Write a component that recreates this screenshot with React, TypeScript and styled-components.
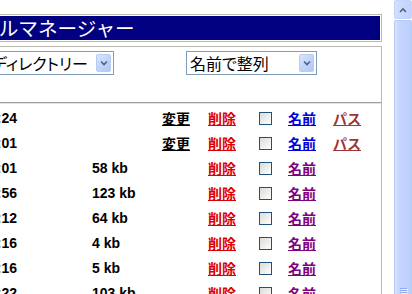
import React from "react";
import styled, { createGlobalStyle } from "styled-components";

const Global = createGlobalStyle`
  html, body { margin: 0; padding: 0; background: #ffffff; overflow: hidden; }
  body { width: 412px; height: 294px; }
`;

const Window = styled.div`
  display: flex;
  width: 412px;
  height: 294px;
  overflow: hidden;
  background: #ffffff;
`;

const Viewport = styled.div`
  flex: 0 0 393px;
  height: 294px;
  overflow: hidden;
`;

const Page = styled.div`
  margin-left: -64px;
  width: 446px;
  padding-top: 14px;
  font-family: "Liberation Sans", "Noto Sans CJK JP", sans-serif;
`;

const TitleFrame = styled.div`
  border: 1px solid #b9b9b0;
  padding: 1px;
`;

const Title = styled.div`
  background: #000080;
  color: #ffffff;
  height: 24px;
  line-height: 24px;
  padding-left: 2px;
  font-family: "Noto Sans CJK JP", sans-serif;
  font-size: 19.6px;
  white-space: nowrap;
`;

const Panel = styled.div`
  margin-top: 4px;
  border: 1px solid #b9b9b0;
  border-bottom: none;
  height: 260px;
`;

const Controls = styled.div`
  display: flex;
  align-items: center;
  padding: 4px 0 0 51px;
  gap: 72px;
  height: 24px;
`;

const SelectBox = styled.div<{ $w: number }>`
  width: ${(p) => p.$w}px;
  height: 24px;
  box-sizing: border-box;
  border: 1px solid #7f9db9;
  display: flex;
  align-items: center;
  padding: 0 2px 0 3px;
  background: #ffffff;
  font-family: "Noto Sans CJK JP", sans-serif;
  font-size: 16px;
  color: #000;
  font-feature-settings: "palt";
`;

const SelectText = styled.span`
  flex: 1;
  white-space: nowrap;
  overflow: hidden;
  line-height: 22px;
`;

const DropButton = styled.span`
  width: 15px;
  height: 18px;
  box-sizing: border-box;
  border: 1px solid #b8cbf5;
  border-radius: 2px;
  background: linear-gradient(135deg, #dce6fd 0%, #c2d4fb 50%, #b3c7f6 100%);
  display: flex;
  align-items: center;
  justify-content: center;
`;

const Rule = styled.div`
  margin-top: 27px;
  height: 0;
  border-top: 1px solid #a0a09a;
  border-bottom: 1px solid #e4e4de;
`;

const Rows = styled.div`
  margin-top: 1px;
`;

const Row = styled.div`
  display: grid;
  grid-template-columns: 80px 145px 46px 51px 29px 45px auto;
  align-items: center;
  height: 25px;
  font-size: 14px;
  font-weight: bold;
  white-space: nowrap;
`;

const Time = styled.span`
  text-align: right;
  color: #000;
`;

const Size = styled.span`
  padding-left: 75px;
  color: #000;
`;

const LinkText = styled.span<{ $c: string }>`
  font-family: "Noto Sans CJK JP", sans-serif;
  font-size: 14px;
  font-weight: bold;
  color: ${(p) => p.$c};
  text-decoration: underline;
  text-underline-offset: 1px;
`;

const Check = styled.span`
  display: block;
  width: 13px;
  height: 13px;
  box-sizing: border-box;
  border: 1px solid #1c5180;
  background: linear-gradient(135deg, #dcdcd7 0%, #f0f0ec 60%, #ffffff 100%);
  margin-top: 2px;
`;

const Scrollbar = styled.div`
  flex: 0 0 19px;
  height: 294px;
  background: #fcfcfe;
  display: flex;
  flex-direction: column;
  padding-left: 1px;
  box-sizing: border-box;
`;

const ArrowButton = styled.div`
  height: 19px;
  box-sizing: border-box;
  border: 1px solid #c4d4fb;
  border-radius: 2px;
  background: linear-gradient(to right, #d2dffd, #c0d2fb);
  display: flex;
  align-items: center;
  justify-content: center;
`;

const Thumb = styled.div`
  flex: 1;
  margin-top: 1px;
  box-sizing: border-box;
  border: 1px solid #b7cbf7;
  border-bottom: none;
  border-radius: 2px 2px 0 0;
  background: linear-gradient(to right, #d6e2fe 0%, #c3d5fd 30%, #bccffb 100%);
  display: flex;
  flex-direction: column;
  justify-content: flex-end;
  align-items: center;
`;

const Grip = styled.div`
  width: 7px;
  height: 1px;
  background: #8faaf0;
  margin-bottom: 1px;
  box-shadow: 1px 1px 0 #e8eefe;
`;

type Item = { time: string; size?: string; change?: boolean; name: string; path?: boolean };

const items: Item[] = [
  { time: "14:24", change: true, name: "#0000dd", path: true },
  { time: "15:01", change: true, name: "#0000dd", path: true },
  { time: "10:01", size: "58 kb", name: "#800080" },
  { time: "11:56", size: "123 kb", name: "#800080" },
  { time: "09:12", size: "64 kb", name: "#800080" },
  { time: "12:16", size: "4 kb", name: "#800080" },
  { time: "12:16", size: "5 kb", name: "#800080" },
  { time: "13:22", size: "103 kb", name: "#800080" },
];

const Chevron = ({ up }: { up?: boolean }) => (
  <svg width="8" height="6" viewBox="0 0 8 6">
    <path
      d={up ? "M1 5 L4 2 L7 5" : "M1 1.5 L4 4.5 L7 1.5"}
      fill="none"
      stroke="#4d6185"
      strokeWidth="1.6"
    />
  </svg>
);

export default function App() {
  return (
    <>
      <Global />
      <Window>
        <Viewport>
          <Page>
            <TitleFrame>
              <Title>ファイルマネージャー</Title>
            </TitleFrame>
            <Panel>
              <Controls>
                <SelectBox $w={126}>
                  <SelectText>ディレクトリー</SelectText>
                  <DropButton>
                    <Chevron />
                  </DropButton>
                </SelectBox>
                <SelectBox $w={131}>
                  <SelectText>名前で整列</SelectText>
                  <DropButton>
                    <Chevron />
                  </DropButton>
                </SelectBox>
              </Controls>
              <Rule />
              <Rows>
                {items.map((it, i) => (
                  <Row key={i}>
                    <Time>{it.time}</Time>
                    <Size>{it.size ?? ""}</Size>
                    <span>{it.change ? <LinkText $c="#000000">変更</LinkText> : null}</span>
                    <span>
                      <LinkText $c="#dd0000">削除</LinkText>
                    </span>
                    <span>
                      <Check />
                    </span>
                    <span>
                      <LinkText $c={it.name}>名前</LinkText>
                    </span>
                    <span>{it.path ? <LinkText $c="#a03333">パス</LinkText> : null}</span>
                  </Row>
                ))}
              </Rows>
            </Panel>
          </Page>
        </Viewport>
        <Scrollbar>
          <ArrowButton>
            <Chevron up />
          </ArrowButton>
          <Thumb>
            <Grip />
            <Grip />
            <Grip />
          </Thumb>
        </Scrollbar>
      </Window>
    </>
  );
}
